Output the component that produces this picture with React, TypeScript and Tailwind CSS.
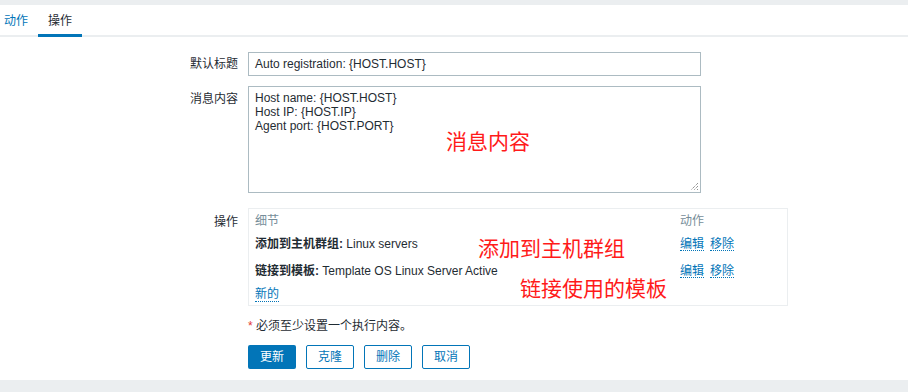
import React from "react";

const font = { fontFamily: '"Liberation Sans", Arial, "Noto Sans CJK SC", sans-serif' };

export default function App() {
  return (
    <div className="relative w-[908px] h-[392px] bg-white text-[12px] text-[#1f2c33] overflow-hidden" style={font}>
      <div className="h-[5px] bg-[#ebeef0]" />
      <div className="flex h-[32px] border-b-2 border-[#ebeef0] relative">
        <div className="pl-[4px] pr-[10px] flex items-center text-[#0275b8] mt-[2px]">动作</div>
        <div className="relative px-[10px] flex items-center mt-[2px]">
          操作
          <div className="absolute left-0 right-0 bottom-[-2px] h-[3px] bg-[#0275b8]" />
        </div>
      </div>
      <div className="pt-[15px]">
        <div className="flex items-center">
          <div className="w-[238px] text-right pr-0">默认标题</div>
          <div className="ml-[10px] w-[453px] h-[24px] border border-[#acbbc2] flex items-center px-[6px]">Auto registration: {"{HOST.HOST}"}</div>
        </div>
        <div className="flex mt-[10px]">
          <div className="w-[238px] text-right pt-[4px]">消息内容</div>
          <div className="ml-[10px] w-[453px] h-[107px] border border-[#acbbc2] px-[6px] pt-[4px] leading-[14px] relative">
            <div>Host name: {"{HOST.HOST}"}</div>
            <div>Host IP: {"{HOST.IP}"}</div>
            <div>Agent port: {"{HOST.PORT}"}</div>
            <svg className="absolute right-[1px] bottom-[1px]" width="9" height="9" viewBox="0 0 9 9">
              <path d="M8 1 L1 8 M8 4 L4 8 M8 7 L7 8" stroke="#666" strokeWidth="1" strokeDasharray="1 1" />
            </svg>
          </div>
        </div>
        <div className="flex mt-[15px]">
          <div className="w-[238px] text-right pt-[5px]">操作</div>
          <div className="ml-[10px] w-[540px] h-[98px] border border-[#ebeef0] px-[6px] pt-[5px] leading-[14px]">
            <div className="flex text-[#768d99] h-[14px]">
              <div className="w-[425px]">细节</div>
              <div>动作</div>
            </div>
            <div className="flex mt-[9px] h-[14px]">
              <div className="w-[425px]"><span className="font-bold">添加到主机群组:</span> Linux servers</div>
              <div className="flex gap-[6px] text-[#0275b8]">
                <span className="border-b border-dotted border-[#0275b8]">编辑</span>
                <span className="border-b border-dotted border-[#0275b8]">移除</span>
              </div>
            </div>
            <div className="flex mt-[13px] h-[14px]">
              <div className="w-[425px]"><span className="font-bold">链接到模板:</span> Template OS Linux Server Active</div>
              <div className="flex gap-[6px] text-[#0275b8]">
                <span className="border-b border-dotted border-[#0275b8]">编辑</span>
                <span className="border-b border-dotted border-[#0275b8]">移除</span>
              </div>
            </div>
            <div className="mt-[9px] h-[14px]">
              <span className="text-[#0275b8] border-b border-dotted border-[#0275b8]">新的</span>
            </div>
          </div>
        </div>
        <div className="ml-[248px] mt-[11px]"><span className="text-[#e33734]">*</span> 必须至少设置一个执行内容。</div>
        <div className="ml-[248px] mt-[10px] flex gap-[10px]">
          <button className="w-[48px] h-[24px] bg-[#0275b8] text-white rounded-[2px]">更新</button>
          <button className="w-[48px] h-[24px] border border-[#0275b8] text-[#0275b8] rounded-[2px]">克隆</button>
          <button className="w-[48px] h-[24px] border border-[#0275b8] text-[#0275b8] rounded-[2px]">删除</button>
          <button className="w-[48px] h-[24px] border border-[#0275b8] text-[#0275b8] rounded-[2px]">取消</button>
        </div>
      </div>
      <div className="absolute left-0 right-0 bottom-0 h-[12px] bg-[#ebeef0]" />
      <div className="absolute left-[446px] top-[127px] text-[21px] leading-[26px] text-[#ff1a1a]" style={{ fontFamily: '"Noto Sans CJK SC", sans-serif' }}>消息内容</div>
      <div className="absolute left-[478px] top-[234px] text-[21px] leading-[26px] text-[#ff1a1a]" style={{ fontFamily: '"Noto Sans CJK SC", sans-serif' }}>添加到主机群组</div>
      <div className="absolute left-[520px] top-[274px] text-[21px] leading-[26px] text-[#ff1a1a]" style={{ fontFamily: '"Noto Sans CJK SC", sans-serif' }}>链接使用的模板</div>
    </div>
  );
}
